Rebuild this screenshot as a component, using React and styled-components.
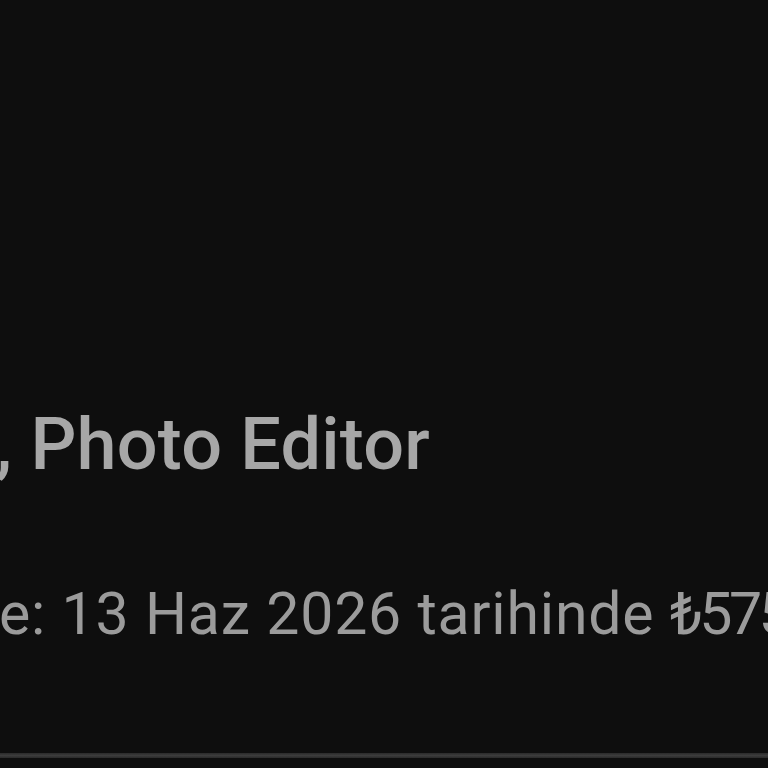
import React from 'react'
import styled, { createGlobalStyle } from 'styled-components'

const GlobalStyle = createGlobalStyle`
  html, body {
    margin: 0;
    padding: 0;
    background: #0e0e0e;
  }
`

const Screen = styled.main`
  width: 768px;
  height: 768px;
  overflow: hidden;
  background: #0e0e0e;
  display: flex;
  flex-direction: column;
  justify-content: flex-end;
  padding-bottom: 10px;
  box-sizing: border-box;
  font-family: Roboto, 'Noto Sans', sans-serif;
`

const Title = styled.h1`
  margin: 0 0 103px;
  margin-left: ${p => p.$shift}px;
  font-size: 72px;
  line-height: 72px;
  font-weight: 500;
  letter-spacing: 0.2px;
  color: #a7a7a7;
  white-space: nowrap;
`

const Offer = styled.p`
  margin: 0 0 110px;
  margin-left: ${p => p.$shift}px;
  font-size: 59px;
  line-height: 59px;
  font-weight: 400;
  letter-spacing: 0.8px;
  color: #9b9b9b;
  white-space: nowrap;
`

const Price = styled.span`
  letter-spacing: -3.5px;
`

const Divider = styled.div`
  height: 5px;
  background: linear-gradient(#2a2a2a, #3c3c3c, #2a2a2a);
`

export default function App() {
  return (
    <>
      <GlobalStyle />
      <Screen>
        <Title $shift={-4}>, Photo Editor</Title>
        <Offer $shift={-1}>
          e: 13 Haz 2026 tarihinde <Price>₺575,99</Price>
        </Offer>
        <Divider />
      </Screen>
    </>
  )
}
